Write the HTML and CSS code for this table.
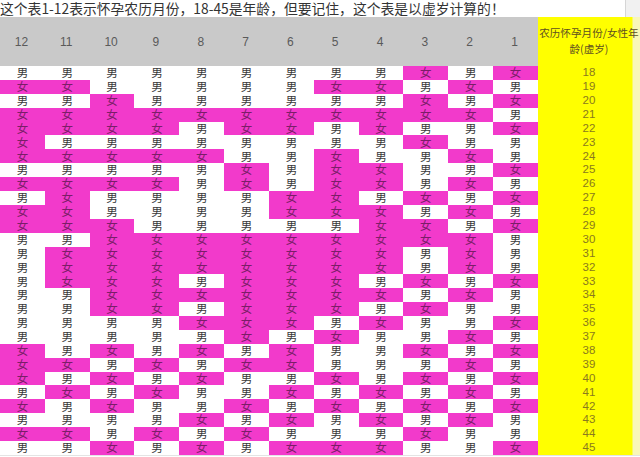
FILE: index.html
```html
<!DOCTYPE html>
<html lang="zh">
<head>
<meta charset="utf-8">
<title>农历怀孕月份表</title>
<link rel="stylesheet" href="styles.css">
</head>
<body>
<div class="title"><span class="title-text">这个表1-12表示怀孕农历月份，18-45是年龄，但要记住，这个表是以虚岁计算的！</span><span class="title-edge"></span></div>
<div class="chart">
<span class="hd">12</span><span class="hd">11</span><span class="hd">10</span><span class="hd">9</span><span class="hd">8</span><span class="hd">7</span><span class="hd">6</span><span class="hd">5</span><span class="hd">4</span><span class="hd">3</span><span class="hd">2</span><span class="hd">1</span><span class="yh">农历怀孕月份/女性年<br>龄(虚岁)</span>
<span class="c m">男</span><span class="c m">男</span><span class="c m">男</span><span class="c m">男</span><span class="c m">男</span><span class="c m">男</span><span class="c m">男</span><span class="c m">男</span><span class="c m">男</span><span class="c f">女</span><span class="c m">男</span><span class="c f">女</span><span class="age">18</span>
<span class="c f">女</span><span class="c f">女</span><span class="c m">男</span><span class="c m">男</span><span class="c m">男</span><span class="c m">男</span><span class="c m">男</span><span class="c f">女</span><span class="c f">女</span><span class="c m">男</span><span class="c f">女</span><span class="c m">男</span><span class="age">19</span>
<span class="c m">男</span><span class="c m">男</span><span class="c f">女</span><span class="c m">男</span><span class="c m">男</span><span class="c m">男</span><span class="c m">男</span><span class="c m">男</span><span class="c m">男</span><span class="c f">女</span><span class="c m">男</span><span class="c f">女</span><span class="age">20</span>
<span class="c f">女</span><span class="c f">女</span><span class="c f">女</span><span class="c f">女</span><span class="c f">女</span><span class="c f">女</span><span class="c f">女</span><span class="c f">女</span><span class="c f">女</span><span class="c f">女</span><span class="c f">女</span><span class="c m">男</span><span class="age">21</span>
<span class="c f">女</span><span class="c f">女</span><span class="c f">女</span><span class="c f">女</span><span class="c m">男</span><span class="c f">女</span><span class="c f">女</span><span class="c m">男</span><span class="c f">女</span><span class="c m">男</span><span class="c m">男</span><span class="c f">女</span><span class="age">22</span>
<span class="c f">女</span><span class="c m">男</span><span class="c m">男</span><span class="c m">男</span><span class="c m">男</span><span class="c m">男</span><span class="c m">男</span><span class="c m">男</span><span class="c m">男</span><span class="c f">女</span><span class="c m">男</span><span class="c m">男</span><span class="age">23</span>
<span class="c f">女</span><span class="c f">女</span><span class="c f">女</span><span class="c f">女</span><span class="c f">女</span><span class="c m">男</span><span class="c m">男</span><span class="c f">女</span><span class="c m">男</span><span class="c m">男</span><span class="c f">女</span><span class="c m">男</span><span class="age">24</span>
<span class="c m">男</span><span class="c m">男</span><span class="c m">男</span><span class="c m">男</span><span class="c m">男</span><span class="c f">女</span><span class="c m">男</span><span class="c f">女</span><span class="c f">女</span><span class="c m">男</span><span class="c m">男</span><span class="c f">女</span><span class="age">25</span>
<span class="c f">女</span><span class="c f">女</span><span class="c f">女</span><span class="c f">女</span><span class="c m">男</span><span class="c f">女</span><span class="c m">男</span><span class="c f">女</span><span class="c f">女</span><span class="c m">男</span><span class="c f">女</span><span class="c m">男</span><span class="age">26</span>
<span class="c m">男</span><span class="c f">女</span><span class="c m">男</span><span class="c m">男</span><span class="c m">男</span><span class="c m">男</span><span class="c f">女</span><span class="c f">女</span><span class="c m">男</span><span class="c f">女</span><span class="c m">男</span><span class="c f">女</span><span class="age">27</span>
<span class="c f">女</span><span class="c f">女</span><span class="c m">男</span><span class="c m">男</span><span class="c m">男</span><span class="c m">男</span><span class="c f">女</span><span class="c f">女</span><span class="c f">女</span><span class="c m">男</span><span class="c f">女</span><span class="c m">男</span><span class="age">28</span>
<span class="c f">女</span><span class="c f">女</span><span class="c f">女</span><span class="c m">男</span><span class="c m">男</span><span class="c m">男</span><span class="c m">男</span><span class="c m">男</span><span class="c f">女</span><span class="c f">女</span><span class="c m">男</span><span class="c f">女</span><span class="age">29</span>
<span class="c m">男</span><span class="c m">男</span><span class="c f">女</span><span class="c f">女</span><span class="c f">女</span><span class="c f">女</span><span class="c f">女</span><span class="c f">女</span><span class="c f">女</span><span class="c f">女</span><span class="c f">女</span><span class="c m">男</span><span class="age">30</span>
<span class="c m">男</span><span class="c f">女</span><span class="c f">女</span><span class="c f">女</span><span class="c f">女</span><span class="c f">女</span><span class="c f">女</span><span class="c f">女</span><span class="c f">女</span><span class="c m">男</span><span class="c f">女</span><span class="c m">男</span><span class="age">31</span>
<span class="c m">男</span><span class="c f">女</span><span class="c f">女</span><span class="c f">女</span><span class="c f">女</span><span class="c f">女</span><span class="c f">女</span><span class="c f">女</span><span class="c f">女</span><span class="c m">男</span><span class="c f">女</span><span class="c m">男</span><span class="age">32</span>
<span class="c m">男</span><span class="c f">女</span><span class="c f">女</span><span class="c f">女</span><span class="c m">男</span><span class="c f">女</span><span class="c f">女</span><span class="c f">女</span><span class="c m">男</span><span class="c f">女</span><span class="c m">男</span><span class="c f">女</span><span class="age">33</span>
<span class="c m">男</span><span class="c m">男</span><span class="c f">女</span><span class="c f">女</span><span class="c f">女</span><span class="c f">女</span><span class="c f">女</span><span class="c f">女</span><span class="c f">女</span><span class="c m">男</span><span class="c f">女</span><span class="c m">男</span><span class="age">34</span>
<span class="c m">男</span><span class="c m">男</span><span class="c f">女</span><span class="c f">女</span><span class="c m">男</span><span class="c f">女</span><span class="c f">女</span><span class="c f">女</span><span class="c m">男</span><span class="c f">女</span><span class="c m">男</span><span class="c m">男</span><span class="age">35</span>
<span class="c m">男</span><span class="c m">男</span><span class="c m">男</span><span class="c m">男</span><span class="c f">女</span><span class="c f">女</span><span class="c f">女</span><span class="c m">男</span><span class="c f">女</span><span class="c m">男</span><span class="c m">男</span><span class="c f">女</span><span class="age">36</span>
<span class="c m">男</span><span class="c m">男</span><span class="c m">男</span><span class="c m">男</span><span class="c m">男</span><span class="c f">女</span><span class="c m">男</span><span class="c f">女</span><span class="c m">男</span><span class="c m">男</span><span class="c f">女</span><span class="c m">男</span><span class="age">37</span>
<span class="c f">女</span><span class="c m">男</span><span class="c f">女</span><span class="c m">男</span><span class="c f">女</span><span class="c m">男</span><span class="c f">女</span><span class="c m">男</span><span class="c m">男</span><span class="c f">女</span><span class="c m">男</span><span class="c f">女</span><span class="age">38</span>
<span class="c f">女</span><span class="c f">女</span><span class="c m">男</span><span class="c f">女</span><span class="c m">男</span><span class="c f">女</span><span class="c f">女</span><span class="c m">男</span><span class="c m">男</span><span class="c m">男</span><span class="c f">女</span><span class="c m">男</span><span class="age">39</span>
<span class="c f">女</span><span class="c m">男</span><span class="c f">女</span><span class="c m">男</span><span class="c f">女</span><span class="c m">男</span><span class="c m">男</span><span class="c f">女</span><span class="c m">男</span><span class="c f">女</span><span class="c m">男</span><span class="c f">女</span><span class="age">40</span>
<span class="c m">男</span><span class="c f">女</span><span class="c m">男</span><span class="c f">女</span><span class="c m">男</span><span class="c m">男</span><span class="c f">女</span><span class="c m">男</span><span class="c f">女</span><span class="c m">男</span><span class="c f">女</span><span class="c m">男</span><span class="age">41</span>
<span class="c f">女</span><span class="c m">男</span><span class="c f">女</span><span class="c m">男</span><span class="c m">男</span><span class="c f">女</span><span class="c m">男</span><span class="c f">女</span><span class="c m">男</span><span class="c f">女</span><span class="c m">男</span><span class="c f">女</span><span class="age">42</span>
<span class="c m">男</span><span class="c m">男</span><span class="c m">男</span><span class="c m">男</span><span class="c f">女</span><span class="c m">男</span><span class="c f">女</span><span class="c m">男</span><span class="c f">女</span><span class="c m">男</span><span class="c f">女</span><span class="c m">男</span><span class="age">43</span>
<span class="c f">女</span><span class="c f">女</span><span class="c m">男</span><span class="c f">女</span><span class="c m">男</span><span class="c f">女</span><span class="c m">男</span><span class="c m">男</span><span class="c m">男</span><span class="c f">女</span><span class="c m">男</span><span class="c m">男</span><span class="age">44</span>
<span class="c m">男</span><span class="c m">男</span><span class="c f">女</span><span class="c m">男</span><span class="c f">女</span><span class="c m">男</span><span class="c f">女</span><span class="c f">女</span><span class="c f">女</span><span class="c m">男</span><span class="c m">男</span><span class="c f">女</span><span class="age">45</span>
</div>
</body>
</html>
```
FILE: styles.css
```css
html, body {
  margin: 0;
  padding: 0;
}

body {
  width: 640px;
  height: 457px;
  overflow: hidden;
  background: #ffffff;
  font-family: "Noto Sans CJK SC", "Noto Sans", sans-serif;
}

.title {
  display: flex;
  height: 17px;
}

.title-text {
  flex: 1;
  font-size: 13.8px;
  line-height: 16px;
  color: #333333;
  white-space: nowrap;
  overflow: hidden;
}

.title-edge {
  width: 14px;
  background: #f1f1f1;
  border-left: 1px solid #d6d6d6;
}

.chart {
  display: grid;
  grid-template-columns: repeat(12, 44.83px) 102px;
  grid-template-rows: 49px repeat(28, 13.9px);
  border-bottom: 1px solid #e4e4e4;
}

.hd {
  display: flex;
  align-items: center;
  justify-content: center;
  background: #c9c9c9;
  color: #5a5a5a;
  font-family: "Liberation Sans", "Noto Sans", sans-serif;
  font-size: 12px;
  padding-right: 2px;
}

.yh {
  display: flex;
  align-items: center;
  justify-content: center;
  text-align: center;
  background: linear-gradient(to right, #ffff00 0, #ffff00 94px, #f9f7b8 95px);
  color: #5e5020;
  font-size: 10.6px;
  line-height: 16px;
  white-space: nowrap;
  padding-bottom: 2px;
}

.c {
  display: flex;
  align-items: center;
  justify-content: center;
  font-size: 11.5px;
  line-height: 1;
}

.m {
  background: #ffffff;
  color: #3a3a3a;
}

.f {
  background: #f23acb;
  color: #7a1e68;
}

.age {
  display: flex;
  align-items: center;
  justify-content: center;
  background: linear-gradient(to right, #ffff00 0, #ffff00 94px, #f9f7b8 95px);
  color: #8a7a1e;
  font-family: "Liberation Sans", "Noto Sans", sans-serif;
  font-size: 11.5px;
  line-height: 1;
}
```
